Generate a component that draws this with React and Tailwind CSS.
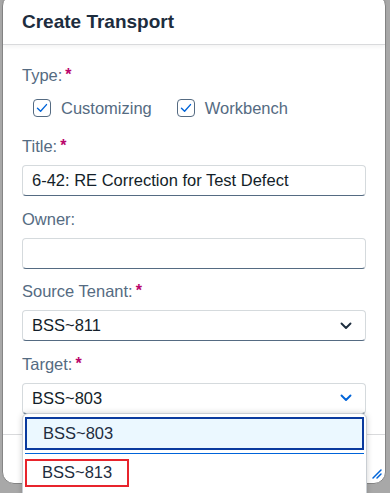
import { useState } from 'react';

const font = { fontFamily: '"Liberation Sans", Arial, sans-serif' };

function Label({ text, required }) {
  return (
    <div className="flex h-[18px] items-center text-[16.5px] leading-[18px] text-[#556b82]">
      {text}
      {required ? <span className="ml-[3px] text-[16px] font-bold text-[#ba066c]">*</span> : null}
    </div>
  );
}

function Check({ label }) {
  return (
    <label className="flex items-center gap-[10px]">
      <span className="flex h-[18px] w-[18px] items-center justify-center rounded-[4px] border border-[#556b82] bg-white">
        <svg width="12" height="10" viewBox="0 0 12 10" fill="none">
          <path d="M1.5 5.2 L4.6 8.2 L10.5 1.6" stroke="#0064d9" strokeWidth="1.4" strokeLinecap="round" strokeLinejoin="round" />
        </svg>
      </span>
      <span className="text-[16.5px] text-[#556b82]">{label}</span>
    </label>
  );
}

function Chevron({ color }) {
  return (
    <svg width="12" height="8" viewBox="0 0 12 8" fill="none">
      <path d="M1.5 1.5 L6 6 L10.5 1.5" stroke={color} strokeWidth="1.9" strokeLinecap="round" strokeLinejoin="round" />
    </svg>
  );
}

function Field({ label, required, value, select, chevronColor, children }) {
  return (
    <div className="relative">
      <Label text={label} required={required} />
      <div className="mt-[10px] flex h-[31px] items-center justify-between rounded-[4px] border border-[#d5dadd] border-b-[#556b82] bg-white pl-[9px] pr-[13px] text-[16.5px] text-[#131e29]">
        <span>{value}</span>
        {select ? <Chevron color={chevronColor} /> : null}
      </div>
      {children}
    </div>
  );
}

export default function App() {
  const [selected] = useState('BSS~803');

  return (
    <div className="h-[493px] w-[390px] overflow-hidden bg-[#a8a8a8] pl-[2px] pr-[4px]" style={font}>
      <div className="relative -mt-[6px] flex h-[490px] flex-col rounded-[12px] border border-[#858585] bg-white">
        <div className="flex h-[50px] shrink-0 items-end border-b border-[#d9dadc] pb-[11px] pl-[19px] shadow-[0_2px_4px_rgba(0,0,0,0.05)]">
          <h1 className="text-[19px] font-bold leading-[22px] text-[#1d2d3e]">Create Transport</h1>
        </div>

        <div className="flex flex-1 flex-col px-[19px] pt-[21px]">
          <Label text="Type:" required />
          <div className="mt-[8px] flex h-[32px] items-center gap-[25px] pl-[11px]">
            <Check label="Customizing" />
            <Check label="Workbench" />
          </div>

          <div className="mt-[13px] flex flex-col gap-[13.5px]">
            <Field label="Title:" required value="6-42: RE Correction for Test Defect" />
            <Field label="Owner:" value="" />
            <Field label="Source Tenant:" required value="BSS~811" select chevronColor="#1d2d3e" />
            <Field label="Target:" required value={selected} select chevronColor="#0064d9">
              <div className="absolute -right-px left-0 top-[calc(100%-1px)] z-10 h-[100px] rounded-t-[6px] border border-[#c9ced3] bg-white px-[2px] pt-[3px] shadow-[0_0_6px_rgba(0,0,0,0.18)]">
                <div className="flex h-[33px] items-center border-2 border-[#0a3a9e] bg-[#ebf8ff] pl-[16px] text-[16.5px] text-[#1d2d3e]">
                  BSS~803
                </div>
                <div className="mt-[3px] h-px bg-[#0064d9]" />
                <div className="mt-[5px] flex h-[28px] w-[104px] items-center border-2 border-[#e8242c] pl-[15px] text-[16.5px] text-[#1d2d3e]">
                  BSS~813
                </div>
              </div>
            </Field>
          </div>
        </div>

        <div className="h-[49px] shrink-0 border-t border-[#d9dadc]" />

        <svg className="absolute bottom-[3px] right-[2px]" width="12" height="12" viewBox="0 0 12 12" fill="none">
          <path d="M2 10 L10 2 M6 10 L10 6" stroke="#0064d9" strokeWidth="1.5" strokeLinecap="round" />
        </svg>
      </div>
    </div>
  );
}
